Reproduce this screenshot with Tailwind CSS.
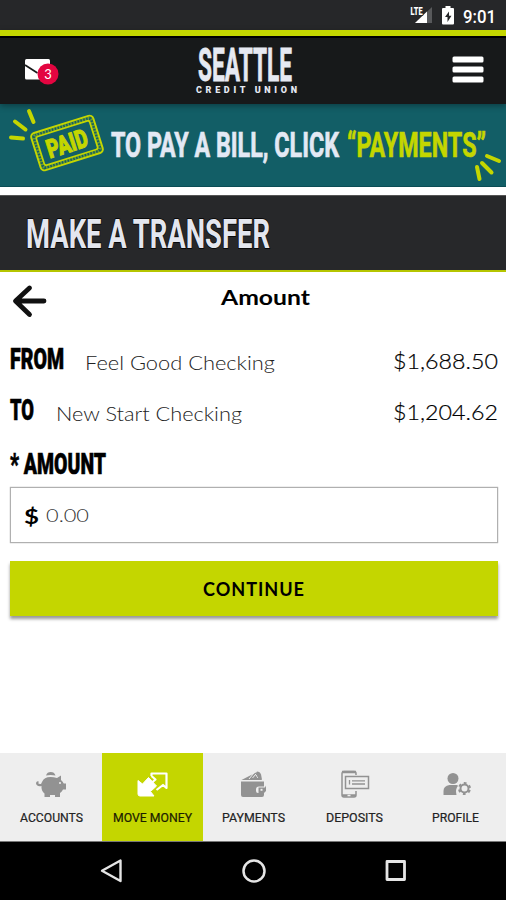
<!DOCTYPE html>
<html lang="en">
<head>
    <meta charset="UTF-8">
    <meta name="viewport" content="width=device-width, initial-scale=1.0">
    <title>Make a Transfer</title>
    <script src="https://cdn.jsdelivr.net/npm/@tailwindcss/browser@4"></script>
</head>
<body class="bg-white w-[506px] h-[900px] overflow-hidden flex flex-col font-['Roboto',sans-serif]">

    <!-- Status bar -->
    <div class="h-[30px] shrink-0 bg-[#262729] flex items-start justify-end pr-[10px]">
        <svg class="mt-[5px] mr-[9px]" width="23" height="20" viewBox="0 0 23 20">
            <path d="M22 2V18H5Z" fill="#58595b"/>
            <path d="M17 6.500V18H5Z" fill="#fff"/>
            <text x="0.500" y="9.500" font-size="11" font-weight="900" fill="#fff" stroke="#262729" stroke-width="1.500" paint-order="stroke" textLength="12" lengthAdjust="spacingAndGlyphs">LTE</text>
        </svg>
        <svg class="mt-[6px] mr-[9px]" width="12" height="19" viewBox="0 0 12 19">
            <path d="M3.500 0h5v2H11a1 1 0 0 1 1 1v14.500a1 1 0 0 1-1 1H1a1 1 0 0 1-1-1V3a1 1 0 0 1 1-1h2.500Z" fill="#fff"/>
            <path d="M7 5.500 3 11h2.500v5L9.500 9.800H7Z" fill="#262729"/>
        </svg>
        <svg class="mt-[9px] overflow-visible" width="33" height="13">
            <text x="0" y="13.500" font-size="19" font-weight="500" fill="#fff" textLength="33" lengthAdjust="spacingAndGlyphs">9:01</text>
        </svg>
    </div>

    <!-- Header -->
    <header class="h-[74px] shrink-0 bg-[#17191a] border-t-[6px] border-[#c4d600] relative z-10 shadow-[0_2px_6px_rgba(0,0,0,0.35)]">
        <div class="h-[68px] border-t-2 border-black flex items-start pl-[24px] pr-[22px]">
            <svg class="mt-[20px]" width="36" height="30" viewBox="0 0 36 30">
                <rect x="1" y="1" width="25" height="20.500" rx="1.500" fill="#fff"/>
                <path d="M1 7 13.500 15" fill="none" stroke="#17191a" stroke-width="1.700"/>
                <circle cx="24" cy="16" r="10.500" fill="#e30540"/>
                <text x="24" y="20.500" font-family="Lato, sans-serif" font-size="13" fill="#fff" text-anchor="middle">3</text>
            </svg>
            <div class="flex flex-col mt-[9px] ml-[136px]">
                <svg class="overflow-visible ml-[2px]" width="94" height="34">
                    <text x="0" y="33.500" font-size="46" font-weight="700" fill="#e6e9f2" stroke="#e6e9f2" stroke-width="0.800" textLength="94" lengthAdjust="spacingAndGlyphs">SEATTLE</text>
                </svg>
                <svg class="overflow-visible mt-[5px]" width="101" height="6">
                    <text x="0" y="6.500" font-size="9" font-weight="900" fill="#e6e9f2" textLength="101">CREDIT UNION</text>
                </svg>
            </div>
            <svg class="mt-[18px] ml-auto" width="32" height="27" viewBox="0 0 32 27" fill="#fff">
                <rect x="0.500" y="0.500" width="31" height="6" rx="1.500"/>
                <rect x="0.500" y="10.500" width="31" height="6" rx="1.500"/>
                <rect x="0.500" y="20.500" width="31" height="6" rx="1.500"/>
            </svg>
        </div>
    </header>

    <!-- Promo banner -->
    <div class="h-[83px] shrink-0 bg-[#125e66] border-b border-[#0b4d55] flex items-start">
        <svg class="shrink-0" width="110" height="82" viewBox="0 0 110 82">
            <g stroke="#c4d600" stroke-width="4" stroke-linecap="round">
                <path d="M29 7l4.500 11M15 17.500l10.500 8M11 33.500l12 1"/>
            </g>
            <g transform="translate(67 39) rotate(-17.500)">
                <rect x="-32.500" y="-19.500" width="65" height="39" rx="4" fill="none" stroke="#c4d600" stroke-width="2"/>
                <rect x="-28" y="-15" width="56" height="30" rx="2" fill="none" stroke="#c4d600" stroke-width="1.800"/>
                <rect x="-30" y="-17" width="60" height="34" rx="3" fill="none" stroke="#c4d600" stroke-width="3" stroke-opacity="0.500" stroke-dasharray="1.500 1.500"/>
                <text x="-21" y="9.500" font-size="26" font-weight="900" fill="#c4d600" stroke="#c4d600" stroke-width="1" textLength="42" lengthAdjust="spacingAndGlyphs">PAID</text>
            </g>
        </svg>
        <svg class="shrink-0 overflow-visible" width="396" height="82" viewBox="110 0 396 82" font-weight="700" font-size="34.500">
            <text x="111" y="53" fill="#e3e9f4" stroke="#e3e9f4" stroke-width="0.700" textLength="228" lengthAdjust="spacingAndGlyphs">TO PAY A BILL, CLICK</text>
            <text x="347" y="53" fill="#c4d600" stroke="#c4d600" stroke-width="0.700" textLength="139" lengthAdjust="spacingAndGlyphs">“PAYMENTS”</text>
            <path d="M487 52l12 5M482 59l9.500 9.500M477 63l2.500 12" stroke="#c4d600" stroke-width="4" stroke-linecap="round"/>
        </svg>
    </div>

    <!-- Page title -->
    <div class="mt-[8px] h-[77px] shrink-0 bg-[#27282a] border-t border-t-[#555] border-b-2 border-b-[#b5c500]">
        <h1 class="pt-[22px] pl-[26px]">
            <svg class="overflow-visible" width="244" height="30">
                <text x="0" y="29.500" font-size="41.500" font-weight="700" fill="#e3e6ee" stroke="#000" stroke-width="1.500" paint-order="stroke" textLength="244" lengthAdjust="spacingAndGlyphs">MAKE A TRANSFER</text>
            </svg>
        </h1>
    </div>

    <!-- Transfer form -->
    <main class="grow pl-[10px] pr-[8px] flex flex-col">
        <div class="flex items-start h-[75px]">
            <svg class="mt-[12px] ml-[2px]" width="36" height="34" viewBox="0 0 36 34" fill="none" stroke="#111" stroke-width="4.800" stroke-linecap="round" stroke-linejoin="round">
                <path d="M17.500 4 3.500 17l14 13.500M4.500 17H32"/>
            </svg>
            <svg class="mt-[18px] ml-[173px] overflow-visible" width="89" height="15">
                <text x="0" y="15" font-family="Lato, sans-serif" font-size="20" font-weight="700" textLength="89" lengthAdjust="spacingAndGlyphs">Amount</text>
            </svg>
        </div>
        <div class="flex items-start justify-between h-[51px]">
            <div class="flex items-start">
                <svg class="overflow-visible" width="54" height="22">
                    <text x="0" y="22" font-size="30" font-weight="900" stroke="#000" stroke-width="0.600" textLength="54" lengthAdjust="spacingAndGlyphs">FROM</text>
                </svg>
                <svg class="overflow-visible ml-[21px]" width="190" height="22">
                    <text x="0" y="22.500" font-family="Lato, sans-serif" font-size="19" font-weight="300" fill="#222" textLength="190" lengthAdjust="spacingAndGlyphs">Feel Good Checking</text>
                </svg>
            </div>
            <svg class="overflow-visible" width="105" height="22">
                <text x="0" y="22" font-family="Lato, sans-serif" font-size="22" font-weight="300" stroke="#000" stroke-width="0.200" textLength="105" lengthAdjust="spacingAndGlyphs">$1,688.50</text>
            </svg>
        </div>
        <div class="flex items-start justify-between h-[54px]">
            <div class="flex items-start">
                <svg class="overflow-visible" width="24" height="22">
                    <text x="0" y="22" font-size="30" font-weight="900" stroke="#000" stroke-width="0.600" textLength="24" lengthAdjust="spacingAndGlyphs">TO</text>
                </svg>
                <svg class="overflow-visible ml-[22px]" width="186" height="22">
                    <text x="0" y="22.500" font-family="Lato, sans-serif" font-size="19" font-weight="300" fill="#222" textLength="186" lengthAdjust="spacingAndGlyphs">New Start Checking</text>
                </svg>
            </div>
            <svg class="overflow-visible" width="105" height="22">
                <text x="0" y="22" font-family="Lato, sans-serif" font-size="22" font-weight="300" stroke="#000" stroke-width="0.200" textLength="105" lengthAdjust="spacingAndGlyphs">$1,204.62</text>
            </svg>
        </div>
        <svg class="overflow-visible shrink-0" width="96" height="22">
            <text x="0" y="22" font-size="30" font-weight="900" stroke="#000" stroke-width="0.600" textLength="96" lengthAdjust="spacingAndGlyphs">* AMOUNT</text>
        </svg>
        <div class="mt-[13px] h-[56px] shrink-0 border border-[#b0b0b0] shadow-[0_0_1px_#999] flex items-start pl-[13px]">
            <svg class="overflow-visible mt-[20px]" width="15" height="15">
                <text x="0" y="15.500" font-family="Lato, sans-serif" font-size="20.500" font-weight="700" textLength="15" lengthAdjust="spacingAndGlyphs">$</text>
            </svg>
            <svg class="overflow-visible mt-[19px] ml-[7px]" width="43" height="15">
                <text x="0" y="15" font-family="Lato, sans-serif" font-size="18.500" font-weight="300" fill="#333" textLength="43" lengthAdjust="spacingAndGlyphs">0.00</text>
            </svg>
        </div>
        <button class="mt-[18px] h-[55px] shrink-0 bg-[#c4d600] shadow-[0_3px_3px_rgba(0,0,0,0.4)] flex justify-center items-center">
            <svg class="overflow-visible" width="102" height="14">
                <text x="0" y="14" font-family="Lato, sans-serif" font-size="18.500" font-weight="700" letter-spacing="1" textLength="102" lengthAdjust="spacingAndGlyphs">CONTINUE</text>
            </svg>
        </button>
    </main>

    <!-- Tab bar -->
    <nav class="h-[89px] shrink-0 bg-[#eee] border-b border-[#777] grid grid-cols-[102px_101px_101px_101px_101px] text-[#929292]">
        <a class="flex flex-col items-center pt-[16px]">
            <svg width="32" height="30" viewBox="0 0 32 30" fill="currentColor">
                <path d="M11 6.500a5 5 0 0 1 9.500 0Q15.500 5.300 11 6.500Z"/>
                <path d="M7 13Q9 8 15.500 8q3 0 6.500 1l4-2.500v4.500q2 1.500 2.700 3.500H31v6h-3q-1 2-3 3.500v4h-5V26h-5v2H9.500V24.500q-3.500-3-3-7.500Q2 18 1 14.500q0-2 1.500-2.300 1.500 0 1.500 1.300H3q.5 2 3 1.500Z"/>
                <circle cx="25" cy="14" r="1" fill="#eee"/>
            </svg>
            <svg class="overflow-visible mt-[13px]" width="63" height="9"><text x="0" y="9.500" font-size="12.500" fill="#222" stroke="#222" stroke-width="0.200" textLength="63" lengthAdjust="spacingAndGlyphs">ACCOUNTS</text></svg>
        </a>
        <a class="bg-[#c4d600] flex flex-col items-center pt-[16px]">
            <svg width="32" height="30" viewBox="0 0 32 30">
                <path d="M1 11.500 5.500 15 11.500 8.500 19.500 17 13.500 22.500 17 27H3a2 2 0 0 1-2-2Z" fill="#fff" stroke="#fff" stroke-width="1" stroke-linejoin="round"/>
                <path d="M14.500 7V4.500H29.500V19L26 16 19.500 21M14.500 7 18.500 10.500 15 13.500" fill="none" stroke="#fff" stroke-width="2.200" stroke-linejoin="round"/>
            </svg>
            <svg class="overflow-visible mt-[13px]" width="79" height="9"><text x="0" y="9.500" font-size="12.500" fill="#1b2000" stroke="#1b2000" stroke-width="0.200" textLength="79" lengthAdjust="spacingAndGlyphs">MOVE MONEY</text></svg>
        </a>
        <a class="flex flex-col items-center pt-[16px]">
            <svg width="32" height="30" viewBox="0 0 32 30" fill="currentColor">
                <path d="M3.500 11 18 3.500 24 11Z"/>
                <path d="M11 10 18 1.500 25 10M14.500 9 18 5M20 9l-2-3" fill="none" stroke="#eee" stroke-width="1"/>
                <path d="M19 2.500q3 0 4 3l1 5h-3L18 4Z"/>
                <path d="M3 12.500H26v5h-5a3 3 0 0 0-3 3v1.500a2 2 0 0 0 2 2h6V26a2 2 0 0 1-2 2H5a2 2 0 0 1-2-2Z"/>
                <path d="M20.500 18.500H27l1-2v5.500l-2 2h-5.500Z"/>
                <path d="M22.500 19.800h2v2h-2Z" fill="#eee"/>
            </svg>
            <svg class="overflow-visible mt-[13px]" width="63" height="9"><text x="0" y="9.500" font-size="12.500" fill="#222" stroke="#222" stroke-width="0.200" textLength="63" lengthAdjust="spacingAndGlyphs">PAYMENTS</text></svg>
        </a>
        <a class="flex flex-col items-center pt-[16px]">
            <svg width="32" height="30" viewBox="0 0 32 30" fill="none" stroke="currentColor">
                <path d="M17 6V4.500A2 2 0 0 0 15 2.500H5A2 2 0 0 0 3 4.500V26a2 2 0 0 0 2 2H15a2 2 0 0 0 2-2V22" stroke-width="1.500"/>
                <path d="M3 3H17M3 26.500H17" stroke-width="2.500"/>
                <path d="M8.500 26.500h3" stroke="#eee" stroke-width="1.500"/>
                <rect x="6.500" y="7.500" width="23" height="12" stroke-width="1.500"/>
                <path d="M13 11.800H26M13 15H26M10.500 11v4.500" stroke-width="1.300"/>
            </svg>
            <svg class="overflow-visible mt-[13px]" width="57" height="9"><text x="0" y="9.500" font-size="12.500" fill="#222" stroke="#222" stroke-width="0.200" textLength="57" lengthAdjust="spacingAndGlyphs">DEPOSITS</text></svg>
        </a>
        <a class="flex flex-col items-center pt-[16px]">
            <svg width="32" height="30" viewBox="0 0 32 30" fill="currentColor">
                <circle cx="13" cy="9.500" r="5.500"/>
                <path d="M3.500 26V22q0-5 6-6h7q1 0 1.500.800-3 3.500-1.500 9.200Z"/>
                <circle cx="24.500" cy="19.500" r="4" fill="none" stroke="currentColor" stroke-width="2"/>
                <circle cx="24.500" cy="19.500" r="5.500" fill="none" stroke="currentColor" stroke-width="2" stroke-dasharray="2.800 2.960" stroke-dashoffset="-1.500"/>
            </svg>
            <svg class="overflow-visible mt-[13px]" width="47" height="9"><text x="0" y="9.500" font-size="12.500" fill="#222" stroke="#222" stroke-width="0.200" textLength="47" lengthAdjust="spacingAndGlyphs">PROFILE</text></svg>
        </a>
    </nav>

    <!-- Android navigation -->
    <div class="h-[58px] shrink-0 bg-black flex justify-between items-start pt-[16px] pl-[99px] pr-[98px]">
        <svg width="26" height="26" viewBox="0 0 26 26" fill="none" stroke="#e5e5e5" stroke-width="2.400" stroke-linejoin="round"><path d="M21.500 2.500V23L3 12.800Z"/></svg>
        <svg width="26" height="26" viewBox="0 0 26 26" fill="none" stroke="#e5e5e5" stroke-width="2.500"><circle cx="13" cy="13" r="10.500"/></svg>
        <svg width="26" height="26" viewBox="0 0 26 26" fill="none" stroke="#e5e5e5" stroke-width="2.800" stroke-linejoin="round"><path d="M5 3.500H22.500V21.500H5Z"/></svg>
    </div>

</body>
</html>
